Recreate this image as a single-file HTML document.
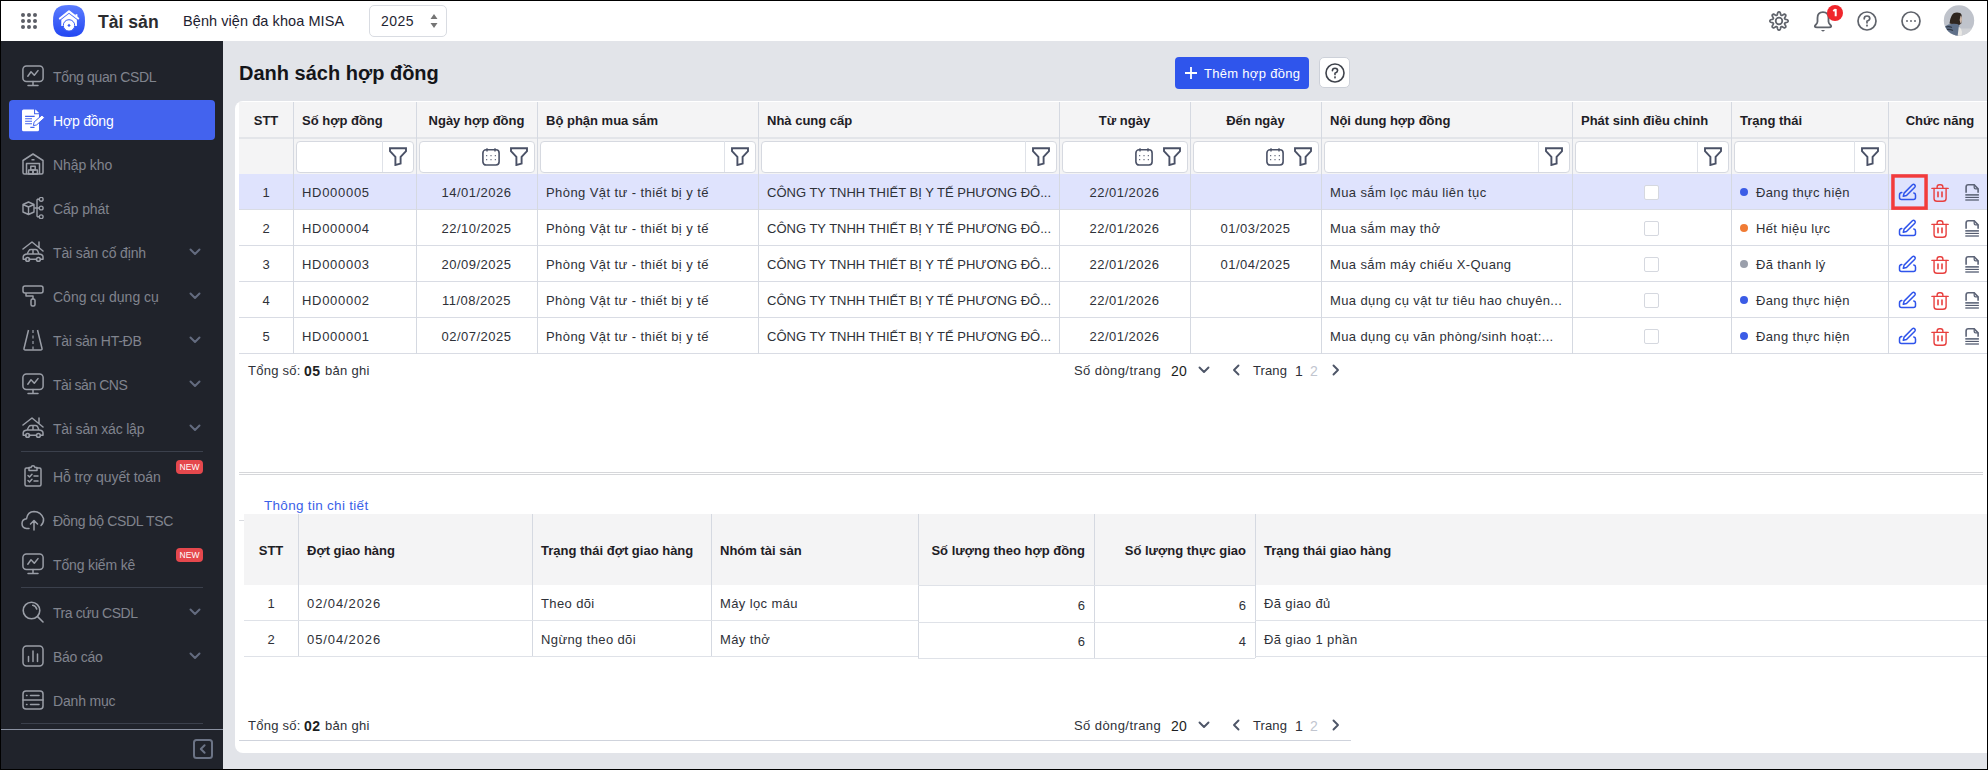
<!DOCTYPE html>
<html><head><meta charset="utf-8">
<style>
*{box-sizing:border-box;margin:0;padding:0}
html,body{width:1988px;height:770px;overflow:hidden;background:#e2e4e9;font-family:"Liberation Sans",sans-serif;position:relative}
.a{position:absolute}
svg{display:block}
.bd{position:absolute;background:#000;z-index:100}
#hdr{left:0;top:0;width:1988px;height:41px;background:#fff}
#side{left:0;top:41px;width:223px;height:729px;background:#20232b}
.si{position:absolute;left:9px;width:206px;height:40px;border-radius:4px;color:#80848e;font-size:14px}
.si .tx{position:absolute;left:44px;top:1px;line-height:40px;white-space:nowrap}
.si .ico{position:absolute}
.si.act{background:#4363ee;color:#fff}
.chev{position:absolute;left:180px;top:16px}
.new{position:absolute;left:167px;top:4px;width:27px;height:14px;background:#e5484d;border-radius:4px;color:#fff;font-size:8.5px;line-height:14px;text-align:center}
.sep{position:absolute;left:21px;width:182px;height:1px;background:#3b404c}
#card{left:235px;top:101px;width:1790px;height:652px;background:#fff;border-radius:8px}
.th{position:absolute;height:37px;line-height:37px;font-size:13px;font-weight:700;color:#1e2025;white-space:nowrap}
.td{position:absolute;height:36px;line-height:38px;font-size:13px;color:#2e3138;white-space:nowrap;letter-spacing:.4px}
.vl{position:absolute;width:1px;background:#d5d9e1}
.hl{position:absolute;height:1px;background:#e2e5ea}
.inp{position:absolute;height:32px;background:#fff;border:1px solid #d6d9e0;border-radius:4px}

</style></head><body>
<div class="bd" style="left:0;top:0;width:1988px;height:1px"></div><div class="bd" style="left:0;top:0;width:1px;height:770px"></div><div class="bd" style="left:1987px;top:0;width:1px;height:770px"></div><div class="bd" style="left:0;top:769px;width:1988px;height:1px"></div>
<div id="hdr" class="a"><svg class="a" style="left:21px;top:13px" width="16" height="16" viewBox="0 0 16 16" fill="#5b5e66"><circle cx="2" cy="2" r="2"/><circle cx="2" cy="8" r="2"/><circle cx="2" cy="14" r="2"/><circle cx="8" cy="2" r="2"/><circle cx="8" cy="8" r="2"/><circle cx="8" cy="14" r="2"/><circle cx="14" cy="2" r="2"/><circle cx="14" cy="8" r="2"/><circle cx="14" cy="14" r="2"/></svg><svg class="a" style="left:53px;top:5px" width="32" height="32" viewBox="0 0 32 32"><defs><linearGradient id="lg" x1="0" y1="0" x2="0" y2="1"><stop offset="0" stop-color="#5c7dff"/><stop offset="1" stop-color="#2246f2"/></linearGradient></defs><path d="M16 0C27.8 0 32 4.2 32 16S27.8 32 16 32S0 27.8 0 16S4.2 0 16 0Z" fill="url(#lg)"/><path d="M6.9 13.5L16 6.4L25.2 13.5" fill="none" stroke="#fff" stroke-width="2.1" stroke-linecap="round" stroke-linejoin="round"/><rect x="22.5" y="9.2" width="1.9" height="3.2" fill="#fff"/><path d="M8.3 14.7L16 8.8L23.9 14.8V20.9H8.3Z" fill="#fff"/><circle cx="16" cy="20.4" r="5.7" fill="#fff" stroke="#3a5df6" stroke-width="1"/><path d="M16 18.7L17.7 20.4L16 22.1L14.3 20.4Z" fill="#3a5df6"/></svg><div class="a" style="left:98px;top:10px;font-size:17.6px;font-weight:700;color:#2b2c2f;line-height:24px;white-space:nowrap">Tài sản</div><div class="a" style="left:183px;top:11px;font-size:14.5px;color:#1d2230;line-height:20px;white-space:nowrap;letter-spacing:.07px">Bệnh viện đa khoa MISA</div><div class="a" style="left:369px;top:5px;width:78px;height:32px;border:1px solid #d9dce2;border-radius:5px"></div><div class="a" style="left:381px;top:11px;font-size:14px;color:#1f2533;line-height:20px;letter-spacing:.5px">2025</div><svg class="a" style="left:429px;top:13px" width="10" height="16" viewBox="0 0 10 16" fill="#757575"><path d="M5 1L8.5 6H1.5Z M5 15L8.5 10H1.5Z"/></svg><svg class="a" style="left:1768px;top:10px" width="22" height="22" viewBox="0 0 22 22" fill="none" stroke="#5f636b" stroke-width="1.75" stroke-linejoin="round"><path d="M11.00 1.90 L11.36 1.94 L11.70 2.09 L12.02 2.39 L12.28 2.89 L12.48 3.55 L12.63 4.21 L12.77 4.71 L12.94 5.04 L13.12 5.24 L13.33 5.36 L13.57 5.43 L13.85 5.42 L14.19 5.30 L14.65 5.04 L15.22 4.68 L15.83 4.36 L16.37 4.19 L16.80 4.21 L17.15 4.35 L17.43 4.57 L17.65 4.85 L17.79 5.20 L17.81 5.63 L17.64 6.17 L17.32 6.78 L16.96 7.35 L16.70 7.81 L16.58 8.15 L16.57 8.43 L16.64 8.67 L16.76 8.88 L16.96 9.06 L17.29 9.23 L17.79 9.37 L18.45 9.52 L19.11 9.72 L19.61 9.98 L19.91 10.30 L20.06 10.64 L20.10 11.00 L20.06 11.36 L19.91 11.70 L19.61 12.02 L19.11 12.28 L18.45 12.48 L17.79 12.63 L17.29 12.77 L16.96 12.94 L16.76 13.12 L16.64 13.33 L16.57 13.57 L16.58 13.85 L16.70 14.19 L16.96 14.65 L17.32 15.22 L17.64 15.83 L17.81 16.37 L17.79 16.80 L17.65 17.15 L17.43 17.43 L17.15 17.65 L16.80 17.79 L16.37 17.81 L15.83 17.64 L15.22 17.32 L14.65 16.96 L14.19 16.70 L13.85 16.58 L13.57 16.57 L13.33 16.64 L13.12 16.76 L12.94 16.96 L12.77 17.29 L12.63 17.79 L12.48 18.45 L12.28 19.11 L12.02 19.61 L11.70 19.91 L11.36 20.06 L11.00 20.10 L10.64 20.06 L10.30 19.91 L9.98 19.61 L9.72 19.11 L9.52 18.45 L9.37 17.79 L9.23 17.29 L9.06 16.96 L8.88 16.76 L8.67 16.64 L8.43 16.57 L8.15 16.58 L7.81 16.70 L7.35 16.96 L6.78 17.32 L6.17 17.64 L5.63 17.81 L5.20 17.79 L4.85 17.65 L4.57 17.43 L4.35 17.15 L4.21 16.80 L4.19 16.37 L4.36 15.83 L4.68 15.22 L5.04 14.65 L5.30 14.19 L5.42 13.85 L5.43 13.57 L5.36 13.33 L5.24 13.12 L5.04 12.94 L4.71 12.77 L4.21 12.63 L3.55 12.48 L2.89 12.28 L2.39 12.02 L2.09 11.70 L1.94 11.36 L1.90 11.00 L1.94 10.64 L2.09 10.30 L2.39 9.98 L2.89 9.72 L3.55 9.52 L4.21 9.37 L4.71 9.23 L5.04 9.06 L5.24 8.88 L5.36 8.67 L5.43 8.43 L5.42 8.15 L5.30 7.81 L5.04 7.35 L4.68 6.78 L4.36 6.17 L4.19 5.63 L4.21 5.20 L4.35 4.85 L4.57 4.57 L4.85 4.35 L5.20 4.21 L5.63 4.19 L6.17 4.36 L6.78 4.68 L7.35 5.04 L7.81 5.30 L8.15 5.42 L8.43 5.43 L8.67 5.36 L8.88 5.24 L9.06 5.04 L9.23 4.71 L9.37 4.21 L9.52 3.55 L9.72 2.89 L9.98 2.39 L10.30 2.09 L10.64 1.94Z"/><circle cx="11" cy="11" r="3.3"/></svg><svg class="a" style="left:1813px;top:10px" width="20" height="22" viewBox="0 0 20 22" fill="none" stroke="#5f636b" stroke-width="1.8" stroke-linejoin="round"><path d="M10 2.2Q4.5 2.2 4.5 8V11.5Q4.5 13 3 14.5Q1.6 15.8 1.8 16.5Q2.2 17.3 4 17.3H16Q17.8 17.3 18.2 16.5Q18.4 15.8 17 14.5Q15.5 13 15.5 11.5V8Q15.5 2.2 10 2.2Z"/><path d="M7.8 20H12.2L10 21.8Z" fill="#5f636b" stroke="none"/></svg><svg class="a" style="left:1827px;top:5px" width="16" height="16" viewBox="0 0 16 16"><circle cx="8" cy="8" r="8" fill="#f0262c"/><path d="M8.7 4V11.2M8.7 4.3L6.2 6" stroke="#fff" stroke-width="2"/></svg><svg class="a" style="left:1857px;top:11px" width="20" height="20" viewBox="0 0 20 20" fill="none" stroke="#5f636b" stroke-width="1.7" stroke-linecap="round"><circle cx="10" cy="10" r="9"/><path d="M7.2 7.8Q7.2 5 10 5Q12.8 5 12.8 7.5Q12.8 9.2 10 10.2V11.8"/><circle cx="10" cy="14.6" r="0.4" fill="#5f636b" stroke-width="1.4"/></svg><svg class="a" style="left:1901px;top:11px" width="20" height="20" viewBox="0 0 20 20" fill="none" stroke="#5f636b" stroke-width="1.7"><circle cx="10" cy="10" r="9"/><path d="M5.3 10H6.7 M9.3 10H10.7 M13.3 10H14.7" stroke-width="2"/></svg><svg class="a" style="left:1943px;top:5px" width="32" height="32" viewBox="0 0 32 32"><defs><clipPath id="av"><circle cx="16" cy="15.5" r="15.2"/></clipPath></defs><g clip-path="url(#av)"><rect width="32" height="32" fill="#bfc3cb"/><rect y="23.5" width="32" height="9" fill="#cfd1d5"/><path d="M8.5 11Q10 7.6 14 7.6Q17.8 7.6 18.6 10Q19 14 18.3 18.5L15.8 20.2L6.5 18.5Q6.8 14 8.5 11Z" fill="#2f2620"/><path d="M17.6 10.5Q19.2 11.5 19 14.5Q18.8 17.5 17.6 18.8L16.6 15Z" fill="#cdb8aa"/><path d="M1.8 21.5Q5 19 10 18.8Q14.5 18.6 16.2 20Q16.5 26 15 32H2Q1 26 1.8 21.5Z" fill="#5f7089"/><path d="M3 22Q6 21 9 22.5M4 24.5Q7 24 10 25.5" stroke="#323a47" stroke-width="1.3" fill="none"/><path d="M15.8 21.5Q18 23 19 27L18.5 32H14.5Z" fill="#e9e8e5"/></g></svg></div>
<div id="side" class="a"><div class="si" style="top:15px"><span class="ico" style="left:13px;top:9px"><svg width="22" height="22" viewBox="0 0 22 22" fill="none" stroke="#9a9ea7" stroke-width="1.5" stroke-linecap="round" stroke-linejoin="round"><rect x="0.9" y="1" width="20.2" height="15.6" rx="3.5"/><path d="M11 16.6V20.6M6 20.6H16M5.8 11.2L9 6.8L12.3 10.2L16 5.6"/></svg></span><span class="tx" style="letter-spacing:-0.35px">Tổng quan CSDL</span></div><div class="si act" style="top:59px"><span class="ico" style="left:11px;top:8px"><svg width="26" height="26" viewBox="0 0 26 26" style="overflow:visible"><path d="M3.5 1.4H15L19 5.4V21.7Q19 23.2 17.5 23.2H3.5Q2 23.2 2 21.7V2.9Q2 1.4 3.5 1.4Z" fill="#fff"/><path d="M14.6 1V5.8H19.4" fill="none" stroke="#4363ee" stroke-width="1.1"/><path d="M15.5 1.4L19 4.9H15.5Z" fill="#fff"/><path d="M5.1 8.4H14.7M5.1 10.7H12M5.1 13.3H12M5.1 15.7H12M10.3 19.4H14.5" stroke="#4363ee" stroke-width="1.1"/><path d="M13.4 17.6L14.07 14.12L22.03 6.99L24.57 9.81L16.61 16.94Z" fill="#fff" stroke="#4363ee" stroke-width="1.0" stroke-linejoin="round"/></svg></span><span class="tx" style="letter-spacing:-0.2px">Hợp đồng</span></div><div class="si" style="top:103px"><span class="ico" style="left:13px;top:9px"><svg width="22" height="22" viewBox="0 0 22 22" fill="none" stroke="#9a9ea7" stroke-width="1.5" stroke-linejoin="round"><path d="M1 7.5L11 1L21 7.5V19.5Q21 21 19.5 21H2.5Q1 21 1 19.5Z"/><path d="M4.5 21V10.5H17.5V21M9.5 6.8H12.5"/><rect x="8.8" y="13.2" width="4.4" height="3.8"/><rect x="6.6" y="17" width="4.4" height="4"/><rect x="11" y="17" width="4.4" height="4"/></svg></span><span class="tx" style="letter-spacing:-0.1px">Nhập kho</span></div><div class="si" style="top:147px"><span class="ico" style="left:13px;top:9px"><svg width="22" height="22" viewBox="0 0 22 22" fill="none" stroke="#9a9ea7" stroke-width="1.4" stroke-linejoin="round"><path d="M1 7.5L6.5 5L12 7.5V15L6.5 17.5L1 15Z M1 7.5L6.5 10L12 7.5 M6.5 10V17.5"/><path d="M12.2 11H15 M15 2.3V19.8 M15 2.3H17 M15 11H17 M15 19.8H17"/><circle cx="19.2" cy="2.3" r="1.9"/><circle cx="19.2" cy="11" r="1.9"/><circle cx="19.2" cy="19.8" r="1.9"/></svg></span><span class="tx" style="letter-spacing:-0.1px">Cấp phát</span></div><div class="si" style="top:191px"><span class="ico" style="left:13px;top:9px"><svg width="22" height="22" viewBox="0 0 22 22" fill="none" stroke="#9a9ea7" stroke-width="1.5" stroke-linecap="round" stroke-linejoin="round"><path d="M1 8L10 1L21 10 M17 6.5V1"/><path d="M5 13L7 9.5Q7.6 8.5 9 8.5H13.5Q14.8 8.5 15.5 9.5L17 13Q20.8 13.3 21 15.8V18.2H18.5 M4 18.2H1.2V15.8Q1.3 13.4 5 13H17 M7 18.2H14.5 M11 8.5V13"/><circle cx="5.6" cy="18.4" r="1.9"/><circle cx="16.4" cy="18.4" r="1.9"/></svg></span><span class="tx" style="letter-spacing:-0.13px">Tài sản cố định</span><span class="chev"><svg width="12" height="8" viewBox="0 0 12 8" fill="none" stroke="#636b7f" stroke-width="2" stroke-linecap="round" stroke-linejoin="round"><path d="M1.5 1.5L6 6L10.5 1.5"/></svg></span></div><div class="si" style="top:235px"><span class="ico" style="left:13px;top:9px"><svg width="22" height="22" viewBox="0 0 22 22" fill="none" stroke="#9a9ea7" stroke-width="1.5" stroke-linejoin="round"><rect x="1" y="1" width="20" height="7" rx="2"/><path d="M4 8V11H11V14"/><rect x="9" y="14" width="4" height="7" rx="1.5"/></svg></span><span class="tx" style="letter-spacing:0px">Công cụ dụng cụ</span><span class="chev"><svg width="12" height="8" viewBox="0 0 12 8" fill="none" stroke="#636b7f" stroke-width="2" stroke-linecap="round" stroke-linejoin="round"><path d="M1.5 1.5L6 6L10.5 1.5"/></svg></span></div><div class="si" style="top:279px"><span class="ico" style="left:13px;top:9px"><svg width="22" height="22" viewBox="0 0 22 22" fill="none" stroke="#9a9ea7" stroke-width="1.5" stroke-linejoin="round"><path d="M6.5 1L2 19.5Q1.8 21 3.3 21H18.7Q20.2 21 20 19.5L15.5 1"/><path d="M11 1V4 M11 6.5V9.5 M11 12V15 M11 17.5V20.5" stroke-width="1.2"/></svg></span><span class="tx" style="letter-spacing:-0.25px">Tài sản HT-ĐB</span><span class="chev"><svg width="12" height="8" viewBox="0 0 12 8" fill="none" stroke="#636b7f" stroke-width="2" stroke-linecap="round" stroke-linejoin="round"><path d="M1.5 1.5L6 6L10.5 1.5"/></svg></span></div><div class="si" style="top:323px"><span class="ico" style="left:13px;top:9px"><svg width="22" height="22" viewBox="0 0 22 22" fill="none" stroke="#9a9ea7" stroke-width="1.5" stroke-linecap="round" stroke-linejoin="round"><rect x="0.9" y="1" width="20.2" height="15.6" rx="3.5"/><path d="M11 16.6V20.6M6 20.6H16M5.8 11.2L9 6.8L12.3 10.2L16 5.6"/></svg></span><span class="tx" style="letter-spacing:-0.45px">Tài sản CNS</span><span class="chev"><svg width="12" height="8" viewBox="0 0 12 8" fill="none" stroke="#636b7f" stroke-width="2" stroke-linecap="round" stroke-linejoin="round"><path d="M1.5 1.5L6 6L10.5 1.5"/></svg></span></div><div class="si" style="top:367px"><span class="ico" style="left:13px;top:9px"><svg width="22" height="22" viewBox="0 0 22 22" fill="none" stroke="#9a9ea7" stroke-width="1.5" stroke-linecap="round" stroke-linejoin="round"><path d="M1 8L10 1L21 10 M17 6.5V1"/><path d="M5 13L7 9.5Q7.6 8.5 9 8.5H13.5Q14.8 8.5 15.5 9.5L17 13Q20.8 13.3 21 15.8V18.2H18.5 M4 18.2H1.2V15.8Q1.3 13.4 5 13H17 M7 18.2H14.5 M11 8.5V13"/><circle cx="5.6" cy="18.4" r="1.9"/><circle cx="16.4" cy="18.4" r="1.9"/></svg></span><span class="tx" style="letter-spacing:-0.19px">Tài sản xác lập</span><span class="chev"><svg width="12" height="8" viewBox="0 0 12 8" fill="none" stroke="#636b7f" stroke-width="2" stroke-linecap="round" stroke-linejoin="round"><path d="M1.5 1.5L6 6L10.5 1.5"/></svg></span></div><div class="si" style="top:415px"><span class="ico" style="left:13px;top:9px"><svg width="22" height="22" viewBox="0 0 22 22" fill="none" stroke="#9a9ea7" stroke-width="1.5" stroke-linecap="round" stroke-linejoin="round"><path d="M7 3H4.5Q3 3 3 4.5V19.5Q3 21 4.5 21H17.5Q19 21 19 19.5V4.5Q19 3 17.5 3H15"/><path d="M7 2.5H9Q9.5 0.8 11 0.8Q12.5 0.8 13 2.5H15V5.5H7Z"/><path d="M6 10.5L7.5 12L10 9.2 M6 15.5L7.5 17L10 14.2 M12 11H16 M12 16H16"/></svg></span><span class="tx" style="letter-spacing:-0.06px">Hỗ trợ quyết toán</span><span class="new">NEW</span></div><div class="si" style="top:459px"><span class="ico" style="left:12px;top:9px"><svg width="24" height="22" viewBox="0 0 24 22" fill="none" stroke="#9a9ea7" stroke-width="1.5" stroke-linecap="round" stroke-linejoin="round"><path d="M8 19.5H5.5Q1 19 1 14.5Q1.2 10.2 5.5 9.8Q6.6 2.5 13 2.5Q20 2.8 22.5 9.5Q23 13.5 20 16.5"/><path d="M13 21V12 M9.5 15L13 11.5L16.5 15"/></svg></span><span class="tx" style="letter-spacing:-0.32px">Đồng bộ CSDL TSC</span></div><div class="si" style="top:503px"><span class="ico" style="left:13px;top:9px"><svg width="22" height="22" viewBox="0 0 22 22" fill="none" stroke="#9a9ea7" stroke-width="1.5" stroke-linecap="round" stroke-linejoin="round"><rect x="0.9" y="1" width="20.2" height="15.6" rx="3.5"/><path d="M11 16.6V20.6M6 20.6H16M5.8 11.2L9 6.8L12.3 10.2L16 5.6"/></svg></span><span class="tx" style="letter-spacing:-0.15px">Tổng kiểm kê</span><span class="new">NEW</span></div><div class="si" style="top:551px"><span class="ico" style="left:13px;top:9px"><svg width="22" height="22" viewBox="0 0 22 22" fill="none" stroke="#9a9ea7" stroke-width="1.6" stroke-linecap="round"><circle cx="9.5" cy="9.5" r="8.3"/><path d="M15.6 15.6L21 21 M10.8 4.3Q13.8 5 14.7 8"/></svg></span><span class="tx" style="letter-spacing:-0.43px">Tra cứu CSDL</span><span class="chev"><svg width="12" height="8" viewBox="0 0 12 8" fill="none" stroke="#636b7f" stroke-width="2" stroke-linecap="round" stroke-linejoin="round"><path d="M1.5 1.5L6 6L10.5 1.5"/></svg></span></div><div class="si" style="top:595px"><span class="ico" style="left:13px;top:9px"><svg width="22" height="22" viewBox="0 0 22 22" fill="none" stroke="#9a9ea7" stroke-width="1.5" stroke-linecap="round"><rect x="1" y="1" width="20" height="20" rx="3.5"/><path d="M6.5 11.5V16.5 M11 6V16.5 M15.5 9V16.5"/></svg></span><span class="tx" style="letter-spacing:-0.27px">Báo cáo</span><span class="chev"><svg width="12" height="8" viewBox="0 0 12 8" fill="none" stroke="#636b7f" stroke-width="2" stroke-linecap="round" stroke-linejoin="round"><path d="M1.5 1.5L6 6L10.5 1.5"/></svg></span></div><div class="si" style="top:639px"><span class="ico" style="left:13px;top:9px"><svg width="22" height="22" viewBox="0 0 22 22" fill="none" stroke="#9a9ea7" stroke-width="1.5" stroke-linecap="round"><rect x="1" y="2" width="20" height="18" rx="3"/><path d="M1 11H21 M8.5 6.5H17 M8.5 15.5H17 M4.5 6.5H5 M4.5 15.5H5"/></svg></span><span class="tx" style="letter-spacing:-0.17px">Danh mục</span></div><div class="sep" style="top:410px"></div><div class="sep" style="top:546px"></div><div class="sep" style="top:682px"></div><div class="a" style="left:1px;top:688px;width:222px;height:1px;background:#8990a0"></div><svg class="a" style="left:193px;top:698px" width="20" height="20" viewBox="0 0 20 20" fill="none" stroke="#6b7385" stroke-width="2"><rect x="1" y="1" width="18" height="18" rx="2.5"/><path d="M11.6 6.2L7.8 10L11.6 13.8" stroke-linecap="round" stroke-linejoin="round"/></svg></div>
<div class="a" style="left:239px;top:61px;font-size:20px;font-weight:700;color:#141519;line-height:24px;white-space:nowrap">Danh sách hợp đồng</div><div class="a" style="left:1175px;top:57px;width:134px;height:32px;background:#2f55ec;border-radius:4px"></div><svg class="a" style="left:1185px;top:67px" width="12" height="12" viewBox="0 0 12 12" stroke="#fff" stroke-width="1.8"><path d="M6 0V12M0 6H12"/></svg><div class="a" style="left:1204px;top:64px;font-size:13px;color:#fff;line-height:20px;letter-spacing:.3px;white-space:nowrap">Thêm hợp đồng</div><div class="a" style="left:1319px;top:57px;width:31px;height:31px;background:#fff;border:1px solid #cdd1d9;border-radius:5px"></div><svg class="a" style="left:1325px;top:63px" width="20" height="20" viewBox="0 0 20 20" fill="none" stroke="#3f434c" stroke-width="1.6" stroke-linecap="round"><circle cx="10" cy="10" r="9"/><path d="M7.4 7.8Q7.4 5.2 10 5.2Q12.6 5.2 12.6 7.6Q12.6 9.2 10 10.2V11.6"/><circle cx="10" cy="14.4" r="0.3" fill="#3f434c" stroke-width="1.5"/></svg><div id="card" class="a"></div><div class="a" style="left:239px;top:102px;width:1760px;height:72px;background:#f4f4f5"></div><div class="a" style="left:239px;top:174px;width:1760px;height:36px;background:#dfe3fd"></div><div class="hl" style="left:239px;top:137px;width:1760px;height:1.5px;background:#e3e5e9"></div><div class="hl" style="left:239px;top:209px;width:1760px;background:#d9dce4;height:1px"></div><div class="hl" style="left:239px;top:245px;width:1760px;background:#d9dce4;height:1px"></div><div class="hl" style="left:239px;top:281px;width:1760px;background:#d9dce4;height:1px"></div><div class="hl" style="left:239px;top:317px;width:1760px;background:#d9dce4;height:1px"></div><div class="hl" style="left:239px;top:353px;width:1760px;background:#d9dce4;height:1px"></div><div class="vl" style="left:293px;top:102px;height:252px"></div><div class="vl" style="left:416px;top:102px;height:252px"></div><div class="vl" style="left:537px;top:102px;height:252px"></div><div class="vl" style="left:758px;top:102px;height:252px"></div><div class="vl" style="left:1059px;top:102px;height:252px"></div><div class="vl" style="left:1190px;top:102px;height:252px"></div><div class="vl" style="left:1321px;top:102px;height:252px"></div><div class="vl" style="left:1572px;top:102px;height:252px"></div><div class="vl" style="left:1731px;top:102px;height:252px"></div><div class="vl" style="left:1888px;top:102px;height:252px"></div><div class="th" style="left:239px;top:102px;width:54px;text-align:center">STT</div><div class="th" style="left:302px;top:102px">Số hợp đồng</div><div class="th" style="left:416px;top:102px;width:121px;text-align:center">Ngày hợp đồng</div><div class="th" style="left:546px;top:102px">Bộ phận mua sắm</div><div class="th" style="left:767px;top:102px">Nhà cung cấp</div><div class="th" style="left:1059px;top:102px;width:131px;text-align:center">Từ ngày</div><div class="th" style="left:1190px;top:102px;width:131px;text-align:center">Đến ngày</div><div class="th" style="left:1330px;top:102px">Nội dung hợp đồng</div><div class="th" style="left:1581px;top:102px">Phát sinh điều chỉnh</div><div class="th" style="left:1740px;top:102px">Trạng thái</div><div class="th" style="left:1888px;top:102px;width:104px;text-align:center">Chức năng</div><div class="inp" style="left:296px;top:141px;width:118px"></div><div class="a" style="left:382px;top:141px;width:1px;height:31px;background:#dfe2e8"></div><div class="a" style="left:389px;top:147px"><svg width="18" height="19" viewBox="0 0 18 19" fill="none" stroke="#4a5166" stroke-width="1.9" stroke-linejoin="miter"><path d="M1 1.2H17V4.2L11.6 9.8V16.6L6.4 18V9.8L1 4.2Z"/></svg></div><div class="inp" style="left:419px;top:141px;width:116px"></div><div class="a" style="left:510px;top:147px"><svg width="18" height="19" viewBox="0 0 18 19" fill="none" stroke="#4a5166" stroke-width="1.9" stroke-linejoin="miter"><path d="M1 1.2H17V4.2L11.6 9.8V16.6L6.4 18V9.8L1 4.2Z"/></svg></div><div class="a" style="left:482px;top:148px"><svg width="18" height="18" viewBox="0 0 18 18" fill="none" stroke="#4a5166" stroke-width="1.6"><rect x="0.9" y="1.8" width="16.2" height="15.2" rx="3.2"/><path d="M5 0.2V3.6M13 0.2V3.6" stroke-width="1.4"/><path d="M4.2 7.7H5.2M8.5 7.7H9.5M12.8 7.7H13.8M4.2 11.6H5.2M8.5 11.6H9.5M12.8 11.6H13.8" stroke-width="1.3"/></svg></div><div class="inp" style="left:540px;top:141px;width:216px"></div><div class="a" style="left:724px;top:141px;width:1px;height:31px;background:#dfe2e8"></div><div class="a" style="left:731px;top:147px"><svg width="18" height="19" viewBox="0 0 18 19" fill="none" stroke="#4a5166" stroke-width="1.9" stroke-linejoin="miter"><path d="M1 1.2H17V4.2L11.6 9.8V16.6L6.4 18V9.8L1 4.2Z"/></svg></div><div class="inp" style="left:761px;top:141px;width:296px"></div><div class="a" style="left:1025px;top:141px;width:1px;height:31px;background:#dfe2e8"></div><div class="a" style="left:1032px;top:147px"><svg width="18" height="19" viewBox="0 0 18 19" fill="none" stroke="#4a5166" stroke-width="1.9" stroke-linejoin="miter"><path d="M1 1.2H17V4.2L11.6 9.8V16.6L6.4 18V9.8L1 4.2Z"/></svg></div><div class="inp" style="left:1062px;top:141px;width:126px"></div><div class="a" style="left:1163px;top:147px"><svg width="18" height="19" viewBox="0 0 18 19" fill="none" stroke="#4a5166" stroke-width="1.9" stroke-linejoin="miter"><path d="M1 1.2H17V4.2L11.6 9.8V16.6L6.4 18V9.8L1 4.2Z"/></svg></div><div class="a" style="left:1135px;top:148px"><svg width="18" height="18" viewBox="0 0 18 18" fill="none" stroke="#4a5166" stroke-width="1.6"><rect x="0.9" y="1.8" width="16.2" height="15.2" rx="3.2"/><path d="M5 0.2V3.6M13 0.2V3.6" stroke-width="1.4"/><path d="M4.2 7.7H5.2M8.5 7.7H9.5M12.8 7.7H13.8M4.2 11.6H5.2M8.5 11.6H9.5M12.8 11.6H13.8" stroke-width="1.3"/></svg></div><div class="inp" style="left:1193px;top:141px;width:126px"></div><div class="a" style="left:1294px;top:147px"><svg width="18" height="19" viewBox="0 0 18 19" fill="none" stroke="#4a5166" stroke-width="1.9" stroke-linejoin="miter"><path d="M1 1.2H17V4.2L11.6 9.8V16.6L6.4 18V9.8L1 4.2Z"/></svg></div><div class="a" style="left:1266px;top:148px"><svg width="18" height="18" viewBox="0 0 18 18" fill="none" stroke="#4a5166" stroke-width="1.6"><rect x="0.9" y="1.8" width="16.2" height="15.2" rx="3.2"/><path d="M5 0.2V3.6M13 0.2V3.6" stroke-width="1.4"/><path d="M4.2 7.7H5.2M8.5 7.7H9.5M12.8 7.7H13.8M4.2 11.6H5.2M8.5 11.6H9.5M12.8 11.6H13.8" stroke-width="1.3"/></svg></div><div class="inp" style="left:1324px;top:141px;width:246px"></div><div class="a" style="left:1538px;top:141px;width:1px;height:31px;background:#dfe2e8"></div><div class="a" style="left:1545px;top:147px"><svg width="18" height="19" viewBox="0 0 18 19" fill="none" stroke="#4a5166" stroke-width="1.9" stroke-linejoin="miter"><path d="M1 1.2H17V4.2L11.6 9.8V16.6L6.4 18V9.8L1 4.2Z"/></svg></div><div class="inp" style="left:1575px;top:141px;width:154px"></div><div class="a" style="left:1697px;top:141px;width:1px;height:31px;background:#dfe2e8"></div><div class="a" style="left:1704px;top:147px"><svg width="18" height="19" viewBox="0 0 18 19" fill="none" stroke="#4a5166" stroke-width="1.9" stroke-linejoin="miter"><path d="M1 1.2H17V4.2L11.6 9.8V16.6L6.4 18V9.8L1 4.2Z"/></svg></div><div class="inp" style="left:1734px;top:141px;width:152px"></div><div class="a" style="left:1854px;top:141px;width:1px;height:31px;background:#dfe2e8"></div><div class="a" style="left:1861px;top:147px"><svg width="18" height="19" viewBox="0 0 18 19" fill="none" stroke="#4a5166" stroke-width="1.9" stroke-linejoin="miter"><path d="M1 1.2H17V4.2L11.6 9.8V16.6L6.4 18V9.8L1 4.2Z"/></svg></div><div class="td" style="left:239px;top:174px;width:54px;text-align:center;letter-spacing:0">1</div><div class="td" style="left:302px;top:174px;letter-spacing:.7px">HD000005</div><div class="td" style="left:416px;top:174px;width:121px;text-align:center;letter-spacing:.5px">14/01/2026</div><div class="td" style="left:546px;top:174px;letter-spacing:.42px">Phòng Vật tư - thiết bị y tế</div><div class="td" style="left:767px;top:174px;letter-spacing:0">CÔNG TY TNHH THIẾT BỊ Y TẾ PHƯƠNG ĐÔ...</div><div class="td" style="left:1059px;top:174px;width:131px;text-align:center;letter-spacing:.5px">22/01/2026</div><div class="td" style="left:1330px;top:174px;letter-spacing:.38px">Mua sắm lọc máu liên tục</div><div class="a" style="left:1644px;top:185px;width:15px;height:15px;background:#fff;border:1px solid #d5d8df;border-radius:2px"></div><div class="a" style="left:1740px;top:188px;width:8px;height:8px;border-radius:50%;background:#3b5ce6"></div><div class="td" style="left:1756px;top:174px;letter-spacing:.35px">Đang thực hiện</div><div class="a" style="left:1894px;top:178px"><svg width="30" height="28" viewBox="0 0 30 28" fill="none" stroke="#2f54eb" stroke-width="1.5" stroke-linecap="round" stroke-linejoin="round"><path d="M9.3 18.3L10.08 15.12L18.4 6.8A1.7 1.7 0 0 1 20.8 9.2L12.48 17.52Z"/><path d="M7.8 14.6Q5.5 14.8 5.5 17V19.5Q5.5 21.5 7.5 21.5H19.5Q21.5 21.5 21.5 19.5V17Q21.5 15.2 19.8 15"/></svg></div><div class="a" style="left:1924px;top:178px"><svg width="30" height="30" viewBox="0 0 30 30" fill="none" stroke="#e8403f" stroke-width="1.4" stroke-linecap="round"><path d="M7.9 10.4H24.2"/><path d="M13.1 10.4V9.2Q13.1 6.8 15.3 6.8H16.7Q18.9 6.8 18.9 9.2V10.4"/><path d="M10.05 10.4V20.5Q10.05 23.3 13 23.3H19Q22.1 23.3 22.1 20.5V10.4"/><path d="M14 14.1V18.8M18 14.1V18.8" stroke-width="1.6"/></svg></div><div class="a" style="left:1964px;top:183px"><svg width="16" height="19" viewBox="0 0 16 19" fill="none" stroke="#5d6477"><path d="M2.1 9.8V4Q2.1 1.8 4.3 1.8H10.2L14.1 5.9V9.8" stroke-width="1.6"/><path d="M10.2 1.8V4.5Q10.2 5.9 11.6 5.9H14.1" stroke-width="1.3"/><path d="M1.3 11.9H14.9M1.3 17H14.9" stroke-width="1.7" stroke="#6b7385"/><path d="M1.3 14.4H14.9" stroke-width="1.1" stroke="#4c5468"/></svg></div><div class="td" style="left:239px;top:210px;width:54px;text-align:center;letter-spacing:0">2</div><div class="td" style="left:302px;top:210px;letter-spacing:.7px">HD000004</div><div class="td" style="left:416px;top:210px;width:121px;text-align:center;letter-spacing:.5px">22/10/2025</div><div class="td" style="left:546px;top:210px;letter-spacing:.42px">Phòng Vật tư - thiết bị y tế</div><div class="td" style="left:767px;top:210px;letter-spacing:0">CÔNG TY TNHH THIẾT BỊ Y TẾ PHƯƠNG ĐÔ...</div><div class="td" style="left:1059px;top:210px;width:131px;text-align:center;letter-spacing:.5px">22/01/2026</div><div class="td" style="left:1190px;top:210px;width:131px;text-align:center;letter-spacing:.5px">01/03/2025</div><div class="td" style="left:1330px;top:210px;letter-spacing:.38px">Mua sắm may thở</div><div class="a" style="left:1644px;top:221px;width:15px;height:15px;background:#fff;border:1px solid #d5d8df;border-radius:2px"></div><div class="a" style="left:1740px;top:224px;width:8px;height:8px;border-radius:50%;background:#f07b35"></div><div class="td" style="left:1756px;top:210px;letter-spacing:.35px">Hết hiệu lực</div><div class="a" style="left:1894px;top:214px"><svg width="30" height="28" viewBox="0 0 30 28" fill="none" stroke="#2f54eb" stroke-width="1.5" stroke-linecap="round" stroke-linejoin="round"><path d="M9.3 18.3L10.08 15.12L18.4 6.8A1.7 1.7 0 0 1 20.8 9.2L12.48 17.52Z"/><path d="M7.8 14.6Q5.5 14.8 5.5 17V19.5Q5.5 21.5 7.5 21.5H19.5Q21.5 21.5 21.5 19.5V17Q21.5 15.2 19.8 15"/></svg></div><div class="a" style="left:1924px;top:214px"><svg width="30" height="30" viewBox="0 0 30 30" fill="none" stroke="#e8403f" stroke-width="1.4" stroke-linecap="round"><path d="M7.9 10.4H24.2"/><path d="M13.1 10.4V9.2Q13.1 6.8 15.3 6.8H16.7Q18.9 6.8 18.9 9.2V10.4"/><path d="M10.05 10.4V20.5Q10.05 23.3 13 23.3H19Q22.1 23.3 22.1 20.5V10.4"/><path d="M14 14.1V18.8M18 14.1V18.8" stroke-width="1.6"/></svg></div><div class="a" style="left:1964px;top:219px"><svg width="16" height="19" viewBox="0 0 16 19" fill="none" stroke="#5d6477"><path d="M2.1 9.8V4Q2.1 1.8 4.3 1.8H10.2L14.1 5.9V9.8" stroke-width="1.6"/><path d="M10.2 1.8V4.5Q10.2 5.9 11.6 5.9H14.1" stroke-width="1.3"/><path d="M1.3 11.9H14.9M1.3 17H14.9" stroke-width="1.7" stroke="#6b7385"/><path d="M1.3 14.4H14.9" stroke-width="1.1" stroke="#4c5468"/></svg></div><div class="td" style="left:239px;top:246px;width:54px;text-align:center;letter-spacing:0">3</div><div class="td" style="left:302px;top:246px;letter-spacing:.7px">HD000003</div><div class="td" style="left:416px;top:246px;width:121px;text-align:center;letter-spacing:.5px">20/09/2025</div><div class="td" style="left:546px;top:246px;letter-spacing:.42px">Phòng Vật tư - thiết bị y tế</div><div class="td" style="left:767px;top:246px;letter-spacing:0">CÔNG TY TNHH THIẾT BỊ Y TẾ PHƯƠNG ĐÔ...</div><div class="td" style="left:1059px;top:246px;width:131px;text-align:center;letter-spacing:.5px">22/01/2026</div><div class="td" style="left:1190px;top:246px;width:131px;text-align:center;letter-spacing:.5px">01/04/2025</div><div class="td" style="left:1330px;top:246px;letter-spacing:.38px">Mua sắm máy chiếu X-Quang</div><div class="a" style="left:1644px;top:257px;width:15px;height:15px;background:#fff;border:1px solid #d5d8df;border-radius:2px"></div><div class="a" style="left:1740px;top:260px;width:8px;height:8px;border-radius:50%;background:#9a9fab"></div><div class="td" style="left:1756px;top:246px;letter-spacing:.35px">Đã thanh lý</div><div class="a" style="left:1894px;top:250px"><svg width="30" height="28" viewBox="0 0 30 28" fill="none" stroke="#2f54eb" stroke-width="1.5" stroke-linecap="round" stroke-linejoin="round"><path d="M9.3 18.3L10.08 15.12L18.4 6.8A1.7 1.7 0 0 1 20.8 9.2L12.48 17.52Z"/><path d="M7.8 14.6Q5.5 14.8 5.5 17V19.5Q5.5 21.5 7.5 21.5H19.5Q21.5 21.5 21.5 19.5V17Q21.5 15.2 19.8 15"/></svg></div><div class="a" style="left:1924px;top:250px"><svg width="30" height="30" viewBox="0 0 30 30" fill="none" stroke="#e8403f" stroke-width="1.4" stroke-linecap="round"><path d="M7.9 10.4H24.2"/><path d="M13.1 10.4V9.2Q13.1 6.8 15.3 6.8H16.7Q18.9 6.8 18.9 9.2V10.4"/><path d="M10.05 10.4V20.5Q10.05 23.3 13 23.3H19Q22.1 23.3 22.1 20.5V10.4"/><path d="M14 14.1V18.8M18 14.1V18.8" stroke-width="1.6"/></svg></div><div class="a" style="left:1964px;top:255px"><svg width="16" height="19" viewBox="0 0 16 19" fill="none" stroke="#5d6477"><path d="M2.1 9.8V4Q2.1 1.8 4.3 1.8H10.2L14.1 5.9V9.8" stroke-width="1.6"/><path d="M10.2 1.8V4.5Q10.2 5.9 11.6 5.9H14.1" stroke-width="1.3"/><path d="M1.3 11.9H14.9M1.3 17H14.9" stroke-width="1.7" stroke="#6b7385"/><path d="M1.3 14.4H14.9" stroke-width="1.1" stroke="#4c5468"/></svg></div><div class="td" style="left:239px;top:282px;width:54px;text-align:center;letter-spacing:0">4</div><div class="td" style="left:302px;top:282px;letter-spacing:.7px">HD000002</div><div class="td" style="left:416px;top:282px;width:121px;text-align:center;letter-spacing:.5px">11/08/2025</div><div class="td" style="left:546px;top:282px;letter-spacing:.42px">Phòng Vật tư - thiết bị y tế</div><div class="td" style="left:767px;top:282px;letter-spacing:0">CÔNG TY TNHH THIẾT BỊ Y TẾ PHƯƠNG ĐÔ...</div><div class="td" style="left:1059px;top:282px;width:131px;text-align:center;letter-spacing:.5px">22/01/2026</div><div class="td" style="left:1330px;top:282px;letter-spacing:.38px">Mua dụng cụ vật tư tiêu hao chuyên...</div><div class="a" style="left:1644px;top:293px;width:15px;height:15px;background:#fff;border:1px solid #d5d8df;border-radius:2px"></div><div class="a" style="left:1740px;top:296px;width:8px;height:8px;border-radius:50%;background:#3b5ce6"></div><div class="td" style="left:1756px;top:282px;letter-spacing:.35px">Đang thực hiện</div><div class="a" style="left:1894px;top:286px"><svg width="30" height="28" viewBox="0 0 30 28" fill="none" stroke="#2f54eb" stroke-width="1.5" stroke-linecap="round" stroke-linejoin="round"><path d="M9.3 18.3L10.08 15.12L18.4 6.8A1.7 1.7 0 0 1 20.8 9.2L12.48 17.52Z"/><path d="M7.8 14.6Q5.5 14.8 5.5 17V19.5Q5.5 21.5 7.5 21.5H19.5Q21.5 21.5 21.5 19.5V17Q21.5 15.2 19.8 15"/></svg></div><div class="a" style="left:1924px;top:286px"><svg width="30" height="30" viewBox="0 0 30 30" fill="none" stroke="#e8403f" stroke-width="1.4" stroke-linecap="round"><path d="M7.9 10.4H24.2"/><path d="M13.1 10.4V9.2Q13.1 6.8 15.3 6.8H16.7Q18.9 6.8 18.9 9.2V10.4"/><path d="M10.05 10.4V20.5Q10.05 23.3 13 23.3H19Q22.1 23.3 22.1 20.5V10.4"/><path d="M14 14.1V18.8M18 14.1V18.8" stroke-width="1.6"/></svg></div><div class="a" style="left:1964px;top:291px"><svg width="16" height="19" viewBox="0 0 16 19" fill="none" stroke="#5d6477"><path d="M2.1 9.8V4Q2.1 1.8 4.3 1.8H10.2L14.1 5.9V9.8" stroke-width="1.6"/><path d="M10.2 1.8V4.5Q10.2 5.9 11.6 5.9H14.1" stroke-width="1.3"/><path d="M1.3 11.9H14.9M1.3 17H14.9" stroke-width="1.7" stroke="#6b7385"/><path d="M1.3 14.4H14.9" stroke-width="1.1" stroke="#4c5468"/></svg></div><div class="td" style="left:239px;top:318px;width:54px;text-align:center;letter-spacing:0">5</div><div class="td" style="left:302px;top:318px;letter-spacing:.7px">HD000001</div><div class="td" style="left:416px;top:318px;width:121px;text-align:center;letter-spacing:.5px">02/07/2025</div><div class="td" style="left:546px;top:318px;letter-spacing:.42px">Phòng Vật tư - thiết bị y tế</div><div class="td" style="left:767px;top:318px;letter-spacing:0">CÔNG TY TNHH THIẾT BỊ Y TẾ PHƯƠNG ĐÔ...</div><div class="td" style="left:1059px;top:318px;width:131px;text-align:center;letter-spacing:.5px">22/01/2026</div><div class="td" style="left:1330px;top:318px;letter-spacing:.38px">Mua dụng cụ văn phòng/sinh hoạt:...</div><div class="a" style="left:1644px;top:329px;width:15px;height:15px;background:#fff;border:1px solid #d5d8df;border-radius:2px"></div><div class="a" style="left:1740px;top:332px;width:8px;height:8px;border-radius:50%;background:#3b5ce6"></div><div class="td" style="left:1756px;top:318px;letter-spacing:.35px">Đang thực hiện</div><div class="a" style="left:1894px;top:322px"><svg width="30" height="28" viewBox="0 0 30 28" fill="none" stroke="#2f54eb" stroke-width="1.5" stroke-linecap="round" stroke-linejoin="round"><path d="M9.3 18.3L10.08 15.12L18.4 6.8A1.7 1.7 0 0 1 20.8 9.2L12.48 17.52Z"/><path d="M7.8 14.6Q5.5 14.8 5.5 17V19.5Q5.5 21.5 7.5 21.5H19.5Q21.5 21.5 21.5 19.5V17Q21.5 15.2 19.8 15"/></svg></div><div class="a" style="left:1924px;top:322px"><svg width="30" height="30" viewBox="0 0 30 30" fill="none" stroke="#e8403f" stroke-width="1.4" stroke-linecap="round"><path d="M7.9 10.4H24.2"/><path d="M13.1 10.4V9.2Q13.1 6.8 15.3 6.8H16.7Q18.9 6.8 18.9 9.2V10.4"/><path d="M10.05 10.4V20.5Q10.05 23.3 13 23.3H19Q22.1 23.3 22.1 20.5V10.4"/><path d="M14 14.1V18.8M18 14.1V18.8" stroke-width="1.6"/></svg></div><div class="a" style="left:1964px;top:327px"><svg width="16" height="19" viewBox="0 0 16 19" fill="none" stroke="#5d6477"><path d="M2.1 9.8V4Q2.1 1.8 4.3 1.8H10.2L14.1 5.9V9.8" stroke-width="1.6"/><path d="M10.2 1.8V4.5Q10.2 5.9 11.6 5.9H14.1" stroke-width="1.3"/><path d="M1.3 11.9H14.9M1.3 17H14.9" stroke-width="1.7" stroke="#6b7385"/><path d="M1.3 14.4H14.9" stroke-width="1.1" stroke="#4c5468"/></svg></div><svg class="a" style="left:1888px;top:171px" width="43" height="42" viewBox="1888 171 43 42"><rect x="1892.95" y="175.95" width="33.1" height="32.2" fill="none" stroke="#f23b3b" stroke-width="3.5"/></svg><div class="a" style="left:248px;top:361px;font-size:13px;line-height:20px;color:#2e3138;white-space:nowrap;letter-spacing:.25px">Tổng số:</div><div class="a" style="left:304px;top:361px;font-size:14px;font-weight:700;line-height:20px;color:#1c1e22;white-space:nowrap;letter-spacing:.4px">05</div><div class="a" style="left:325px;top:361px;font-size:13px;line-height:20px;color:#2e3138;white-space:nowrap;letter-spacing:.3px">bản ghi</div><div class="a" style="left:1074px;top:361px;font-size:13px;line-height:20px;color:#2e3138;white-space:nowrap;letter-spacing:.42px">Số dòng/trang</div><div class="a" style="left:1171px;top:361px;font-size:14px;line-height:20px;color:#1c1e22;white-space:nowrap;letter-spacing:.2px">20</div><svg class="a" style="left:1198px;top:366px" width="12" height="8" viewBox="0 0 12 8" fill="none" stroke="#4d5567" stroke-width="1.9" stroke-linecap="round" stroke-linejoin="round"><path d="M1.5 1.5L6 6L10.5 1.5"/></svg><svg class="a" style="left:1232px;top:364px" width="9" height="12" viewBox="0 0 9 12" fill="none" stroke="#4d5567" stroke-width="1.9" stroke-linecap="round" stroke-linejoin="round"><path d="M6.5 1.5L2 6L6.5 10.5"/></svg><div class="a" style="left:1253px;top:361px;font-size:13px;line-height:20px;color:#2e3138;white-space:nowrap;letter-spacing:.1px">Trang</div><div class="a" style="left:1295px;top:361px;font-size:14px;line-height:20px;color:#2e3138;white-space:nowrap">1</div><div class="a" style="left:1310px;top:361px;font-size:14px;line-height:20px;color:#c1c5cf;white-space:nowrap">2</div><svg class="a" style="left:1331px;top:364px" width="9" height="12" viewBox="0 0 9 12" fill="none" stroke="#4d5567" stroke-width="1.9" stroke-linecap="round" stroke-linejoin="round"><path d="M2.5 1.5L7 6L2.5 10.5"/></svg><div class="a" style="left:239px;top:472px;width:1744px;height:1px;background:#d6d7da"></div><div class="a" style="left:239px;top:474px;width:1744px;height:1px;background:#d6d7da"></div><div class="a" style="left:264px;top:496px;font-size:13.5px;line-height:20px;color:#3a61e8;white-space:nowrap;letter-spacing:.3px">Thông tin chi tiết</div><div class="a" style="left:239px;top:520px;width:5px;height:1px;background:#d9dbe0"></div><div class="a" style="left:244px;top:514px;width:1760px;height:71px;background:#f4f4f5"></div><div class="vl" style="left:298px;top:514px;height:142px"></div><div class="vl" style="left:532px;top:514px;height:142px"></div><div class="vl" style="left:711px;top:514px;height:142px"></div><div class="vl" style="left:918px;top:514px;height:144px"></div><div class="vl" style="left:1094px;top:514px;height:144px"></div><div class="vl" style="left:1255px;top:514px;height:144px"></div><div class="th" style="left:244px;width:54px;text-align:center;top:515px;height:71px;line-height:71px;">STT</div><div class="th" style="left:307px;top:515px;height:71px;line-height:71px;">Đợt giao hàng</div><div class="th" style="left:541px;top:515px;height:71px;line-height:71px;">Trạng thái đợt giao hàng</div><div class="th" style="left:720px;top:515px;height:71px;line-height:71px;">Nhóm tài sản</div><div class="th" style="left:918px;width:167px;text-align:right;top:515px;height:71px;line-height:71px;">Số lượng theo hợp đồng</div><div class="th" style="left:1094px;width:152px;text-align:right;top:515px;height:71px;line-height:71px;">Số lượng thực giao</div><div class="th" style="left:1264px;top:515px;height:71px;line-height:71px;">Trạng thái giao hàng</div><div class="td" style="left:244px;top:585px;width:54px;text-align:center;letter-spacing:0">1</div><div class="td" style="left:307px;top:585px;letter-spacing:.9px">02/04/2026</div><div class="td" style="left:541px;top:585px;letter-spacing:.38px">Theo dõi</div><div class="td" style="left:720px;top:585px;letter-spacing:.38px">Máy lọc máu</div><div class="td" style="left:918px;top:587px;width:167px;text-align:right;letter-spacing:0">6</div><div class="td" style="left:1094px;top:587px;width:152px;text-align:right;letter-spacing:0">6</div><div class="td" style="left:1264px;top:585px;letter-spacing:.38px">Đã giao đủ</div><div class="td" style="left:244px;top:621px;width:54px;text-align:center;letter-spacing:0">2</div><div class="td" style="left:307px;top:621px;letter-spacing:.9px">05/04/2026</div><div class="td" style="left:541px;top:621px;letter-spacing:.38px">Ngừng theo dõi</div><div class="td" style="left:720px;top:621px;letter-spacing:.38px">Máy thở</div><div class="td" style="left:918px;top:623px;width:167px;text-align:right;letter-spacing:0">6</div><div class="td" style="left:1094px;top:623px;width:152px;text-align:right;letter-spacing:0">4</div><div class="td" style="left:1264px;top:621px;letter-spacing:.38px">Đã giao 1 phần</div><div class="hl" style="left:244px;top:620px;width:674px;background:#dfe2e8"></div><div class="hl" style="left:918px;top:622px;width:337px;background:#dfe2e8"></div><div class="hl" style="left:1255px;top:620px;width:740px;background:#dfe2e8"></div><div class="hl" style="left:244px;top:656px;width:674px;background:#dfe2e8"></div><div class="hl" style="left:918px;top:658px;width:337px;background:#dfe2e8"></div><div class="hl" style="left:1255px;top:656px;width:740px;background:#dfe2e8"></div><div class="hl" style="left:918px;top:585px;width:337px;background:#dfe2e8"></div><div class="a" style="left:248px;top:716px;font-size:13px;line-height:20px;color:#2e3138;white-space:nowrap;letter-spacing:.25px">Tổng số:</div><div class="a" style="left:304px;top:716px;font-size:14px;font-weight:700;line-height:20px;color:#1c1e22;white-space:nowrap;letter-spacing:.4px">02</div><div class="a" style="left:325px;top:716px;font-size:13px;line-height:20px;color:#2e3138;white-space:nowrap;letter-spacing:.3px">bản ghi</div><div class="a" style="left:1074px;top:716px;font-size:13px;line-height:20px;color:#2e3138;white-space:nowrap;letter-spacing:.42px">Số dòng/trang</div><div class="a" style="left:1171px;top:716px;font-size:14px;line-height:20px;color:#1c1e22;white-space:nowrap;letter-spacing:.2px">20</div><svg class="a" style="left:1198px;top:721px" width="12" height="8" viewBox="0 0 12 8" fill="none" stroke="#4d5567" stroke-width="1.9" stroke-linecap="round" stroke-linejoin="round"><path d="M1.5 1.5L6 6L10.5 1.5"/></svg><svg class="a" style="left:1232px;top:719px" width="9" height="12" viewBox="0 0 9 12" fill="none" stroke="#4d5567" stroke-width="1.9" stroke-linecap="round" stroke-linejoin="round"><path d="M6.5 1.5L2 6L6.5 10.5"/></svg><div class="a" style="left:1253px;top:716px;font-size:13px;line-height:20px;color:#2e3138;white-space:nowrap;letter-spacing:.1px">Trang</div><div class="a" style="left:1295px;top:716px;font-size:14px;line-height:20px;color:#2e3138;white-space:nowrap">1</div><div class="a" style="left:1310px;top:716px;font-size:14px;line-height:20px;color:#c1c5cf;white-space:nowrap">2</div><svg class="a" style="left:1331px;top:719px" width="9" height="12" viewBox="0 0 9 12" fill="none" stroke="#4d5567" stroke-width="1.9" stroke-linecap="round" stroke-linejoin="round"><path d="M2.5 1.5L7 6L2.5 10.5"/></svg><div class="a" style="left:239px;top:740px;width:1112px;height:1px;background:#cfd3dc"></div></body></html>
